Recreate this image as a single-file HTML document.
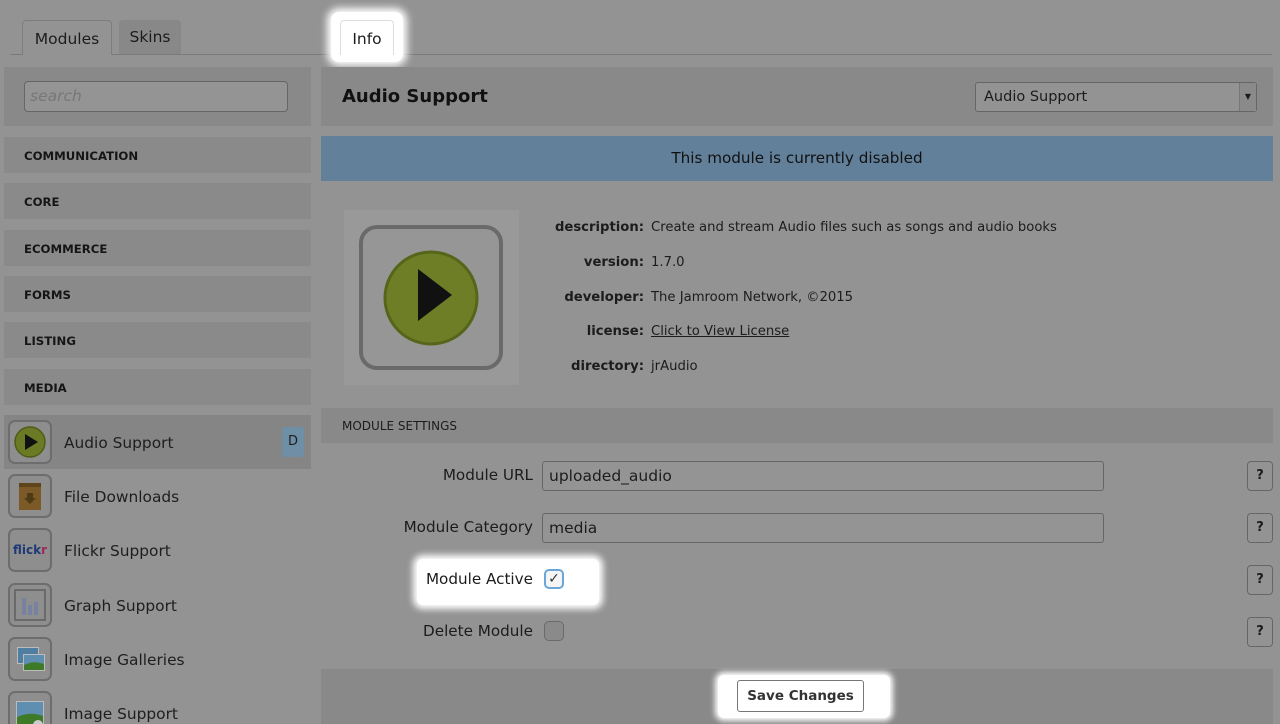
<!DOCTYPE html>
<html style="overflow:hidden;height:724px"><head><meta charset="utf-8"><style>
*{box-sizing:border-box;margin:0;padding:0}
body{width:1280px;height:724px;overflow:hidden;background:#939393;font-family:"DejaVu Sans","Liberation Sans",sans-serif;color:#1c1c1c;position:relative}
.a{position:absolute}
.cat{position:absolute;left:4px;width:307px;height:36px;background:#8a8a8a;font-weight:bold;font-size:11.7px;line-height:38px;padding-left:20px;color:#151515}
.row{position:absolute;left:4px;width:307px;height:54px;font-size:15.4px;line-height:56px;padding-left:60px;color:#1e1e1e}
.ic{position:absolute;left:4px;top:5px;width:44px;height:44px;border:2px solid #6d6d6d;border-radius:7px;background:#8e8e8e;overflow:hidden}
.lbl{position:absolute;width:200px;text-align:right;font-weight:bold;font-size:13.2px}
.val{position:absolute;left:651px;font-size:13.2px}
.flab{position:absolute;width:200px;text-align:right;left:333px;font-size:15.2px}
.inp{position:absolute;left:542px;width:562px;height:30px;border:1px solid #666;border-radius:3px;background:#949494;font-size:15.5px;line-height:28px;padding-left:6px}
.q{position:absolute;left:1247px;width:26px;height:30px;border:1px solid #666;border-radius:4px;font-weight:bold;font-size:13px;line-height:28px;text-align:center}
</style></head><body>
<div class="a" style="left:10px;top:54px;width:1262px;height:1px;background:#7a7a7a"></div>
<div class="a" style="left:22px;top:20px;width:90px;height:35px;border:1px solid #7d7d7d;border-bottom:none;border-radius:4px 4px 0 0;background:#939393;font-size:15.5px;line-height:36px;text-align:center">Modules</div>
<div class="a" style="left:119px;top:20px;width:62px;height:34px;background:#888;border-radius:4px 4px 0 0;font-size:15.5px;line-height:34px;text-align:center">Skins</div>
<div class="a" style="left:331px;top:12px;width:72px;height:50px;background:#fff;border-radius:8px;box-shadow:0 0 8px 4px #fff"></div>
<div class="a" style="left:340px;top:20px;width:54px;height:35px;border:1px solid #ddd;border-bottom:none;border-radius:4px 4px 0 0;background:#fff;font-size:15.5px;line-height:36px;text-align:center">Info</div>

<div class="a" style="left:4px;top:67px;width:307px;height:59px;background:#898989"></div>
<div class="a" style="left:24px;top:81px;width:264px;height:31px;border:1px solid #666;border-radius:4px;background:#949494;font-size:15.5px;font-style:italic;color:#777;line-height:29px;padding-left:5px">search</div>

<div class="cat" style="top:137px">COMMUNICATION</div>
<div class="cat" style="top:183px">CORE</div>
<div class="cat" style="top:230px">ECOMMERCE</div>
<div class="cat" style="top:276px">FORMS</div>
<div class="cat" style="top:322px">LISTING</div>
<div class="cat" style="top:369px">MEDIA</div>

<div class="row" style="top:415px;background:#858585">Audio Support<div class="ic"><svg width="40" height="40"><circle cx="20" cy="20" r="15" fill="#6b7a25" stroke="#4f5c17" stroke-width="1.5"/><path d="M15 12 L28 20 L15 28Z" fill="#111"/></svg></div><div class="a" style="left:278px;top:12px;width:22px;height:30px;background:#6e8fa5;border-radius:3px;font-size:13px;line-height:30px;text-align:center;padding:0">D</div></div>
<div class="row" style="top:469px">File Downloads<div class="ic"><svg width="40" height="40"><rect x="9" y="7" width="22" height="27" fill="#7b5a27"/><rect x="9" y="7" width="22" height="4" fill="#5f441b"/><path d="M17 17h6v5h3l-6 6-6-6h3z" fill="#4f3a16"/></svg></div></div>
<div class="row" style="top:523px">Flickr Support<div class="ic" style="font-size:12px;font-weight:bold;line-height:40px;text-align:center;padding:0"><span style="color:#1f3a76">flick</span><span style="color:#a0255b">r</span></div></div>
<div class="row" style="top:578px">Graph Support<div class="ic"><svg width="40" height="40"><rect x="5" y="5" width="30" height="30" fill="none" stroke="#6a6a6a" stroke-width="2"/><rect x="12" y="13" width="4" height="17" fill="#7882a0"/><rect x="18" y="20" width="4" height="10" fill="#7882a0"/><rect x="24" y="17" width="4" height="13" fill="#7882a0"/></svg></div></div>
<div class="row" style="top:632px">Image Galleries<div class="ic"><svg width="40" height="40"><rect x="7" y="8" width="22" height="17" fill="#bbb"/><rect x="8" y="9" width="20" height="15" fill="#4f7ea0"/><rect x="13" y="15" width="22" height="17" fill="#bbb"/><rect x="14" y="16" width="20" height="15" fill="#5f8fb0"/><path d="M14 26 Q24 21 34 25 V31 H14Z" fill="#3e7a28"/></svg></div></div>
<div class="row" style="top:686px">Image Support<div class="ic"><svg width="40" height="40"><rect x="6" y="8" width="28" height="24" fill="#bbb"/><rect x="7" y="9" width="26" height="22" fill="#5f8fb0"/><path d="M7 24 Q20 18 33 23 V31 H7Z" fill="#3e7a28"/><circle cx="28" cy="32" r="5" fill="#ccc"/></svg></div></div>

<div class="a" style="left:321px;top:67px;width:952px;height:59px;background:#898989"></div>
<div class="a" style="left:342px;top:86px;font-size:18px;font-weight:bold;color:#111">Audio Support</div>
<div class="a" style="left:975px;top:82px;width:282px;height:30px;border:1px solid #666;border-radius:3px;background:#939393;font-size:14.5px;line-height:28px;padding-left:8px">Audio Support<div class="a" style="right:0;top:0;width:17px;height:28px;background:#8a8a8a;border-left:1px solid #777;font-size:8px;text-align:center;line-height:28px">▼</div></div>

<div class="a" style="left:321px;top:136px;width:952px;height:45px;background:#62809a;font-size:15.2px;line-height:45px;text-align:center;color:#111">This module is currently disabled</div>

<div class="a" style="left:344px;top:210px;width:175px;height:175px;background:#999"></div>
<div class="a" style="left:359px;top:225px;width:144px;height:145px;border:4px solid #6a6a6a;border-radius:18px;background:#969696"></div>
<svg class="a" style="left:380px;top:247px" width="102" height="102"><circle cx="51" cy="51" r="46" fill="#6e7e27" stroke="#55661a" stroke-width="3"/><path d="M38 22 L72 48 L38 74Z" fill="#111"/></svg>

<div class="lbl" style="left:444px;top:220px">description:</div><div class="val" style="top:220px">Create and stream Audio files such as songs and audio books</div>
<div class="lbl" style="left:444px;top:255px">version:</div><div class="val" style="top:255px">1.7.0</div>
<div class="lbl" style="left:444px;top:290px">developer:</div><div class="val" style="top:290px">The Jamroom Network, ©2015</div>
<div class="lbl" style="left:444px;top:324px">license:</div><div class="val" style="top:324px;text-decoration:underline">Click to View License</div>
<div class="lbl" style="left:444px;top:359px">directory:</div><div class="val" style="top:359px">jrAudio</div>

<div class="a" style="left:321px;top:408px;width:952px;height:35px;background:#898989;font-size:12px;line-height:37px;padding-left:21px">MODULE SETTINGS</div>

<div class="flab" style="top:466px">Module URL</div><div class="inp" style="top:461px">uploaded_audio</div><div class="q" style="top:461px">?</div>
<div class="flab" style="top:518px">Module Category</div><div class="inp" style="top:513px">media</div><div class="q" style="top:513px">?</div>
<div class="a" style="left:417px;top:559px;width:182px;height:46px;background:#fff;border-radius:6px;box-shadow:0 0 7px 4px #fff"></div>
<div class="flab" style="top:570px">Module Active</div>
<div class="a" style="left:544px;top:569px;width:20px;height:20px;border:2px solid #6aa7d8;border-radius:5px;background:#f5f5f5;font-size:14px;line-height:16px;text-align:center;color:#333">✓</div>
<div class="q" style="top:565px">?</div>
<div class="flab" style="top:622px">Delete Module</div>
<div class="a" style="left:544px;top:621px;width:20px;height:20px;border:1px solid #6a6a6a;border-radius:5px;background:#8a8a8a"></div>
<div class="q" style="top:617px">?</div>

<div class="a" style="left:321px;top:669px;width:952px;height:55px;background:#898989"></div>
<div class="a" style="left:718px;top:675px;width:172px;height:43px;background:#fff;border-radius:6px;box-shadow:0 0 6px 3px #fff"></div>
<div class="a" style="left:737px;top:680px;width:127px;height:32px;border:1px solid #777;border-radius:3px;background:#fff;font-weight:bold;font-size:13.5px;line-height:31px;text-align:center;color:#333">Save Changes</div>
</body></html>
